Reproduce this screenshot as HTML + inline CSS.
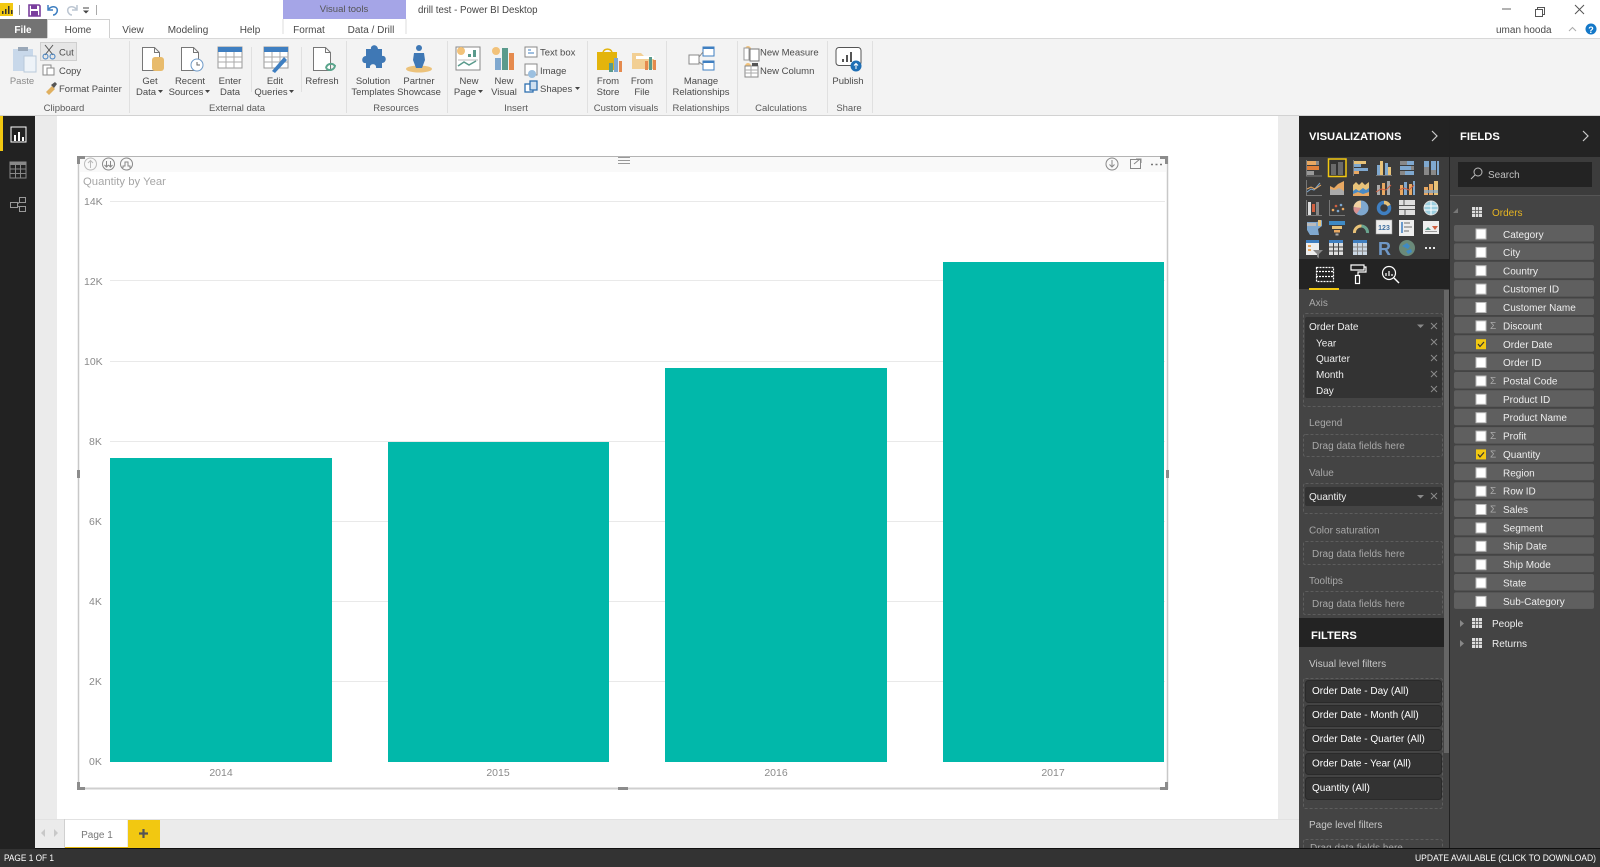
<!DOCTYPE html>
<html><head><meta charset="utf-8"><title>drill test - Power BI Desktop</title>
<style>
html,body{margin:0;padding:0;width:1600px;height:867px;overflow:hidden;background:#fff}
svg{display:block}
text{font-family:"Liberation Sans",sans-serif;font-size:9.5px;fill:#4a4a4a}
.m{text-anchor:middle}
.g{fill:#5a5a5a}
.t{font-size:10px}
.w{fill:#fff;font-size:10px}
.l{fill:#a8a8a8;font-size:10px}
.f{fill:#eee;font-size:10px}
.ax{fill:#8a8a8a;font-size:10.5px}
.h{fill:#fff;font-weight:bold;font-size:11.2px}
</style></head><body>
<svg width="1600" height="867" viewBox="0 0 1600 867" xmlns="http://www.w3.org/2000/svg">
<defs>
<g id="doc"><path d="M.5.5h12l5 5v18H.5z" fill="#fff" stroke="#777"/><path d="M12.5.5v5h5" fill="none" stroke="#777"/></g>
<g id="tb"><rect width="24" height="21" fill="#fff" stroke="#999"/><rect width="24" height="5" fill="#3f7fc1"/><path d="M0 10h24M0 15h24M8 5v16M16 5v16" stroke="#aaa"/></g>
<g id="x"><path d="M0 0l6 6M6 0l-6 6" stroke="#8a8a8a" fill="none"/></g>
<path id="dn" d="M0 0h7l-3.5 3.5z" fill="#8a8a8a"/>
<path id="arrow" d="M0 0h5l-2.5 3z" fill="#444"/>
<g id="cb"><rect width="10" height="10" fill="#fff" stroke="#bbb" stroke-width="1"/></g>
<g id="tbl"><rect width="10" height="10" fill="#ddd"/><path d="M0 3.5h10M0 6.5h10M3.5 0v10M6.5 0v10" stroke="#555" stroke-width=".8"/></g>
</defs>

<!-- title bar / tabs -->
<rect width="1600" height="867" fill="#fff"/>
<rect x="0" y="3" width="13" height="13" fill="#f2c811"/>
<path d="M2 14v-3h1.500v3zM5 14V9h1.500v5zM8 14V6h1.500v8zM11 14v-4h1.500v4z" fill="#333"/>
<path d="M19.500 5v10" stroke="#999"/>
<path d="M29 5h10l1 1v10H29z" fill="#fff" stroke="#7a3e9d" stroke-width="1.600"/><rect x="31" y="5" width="6" height="4" fill="#7a3e9d"/><rect x="31" y="11" width="7" height="5" fill="#7a3e9d"/>
<path d="M48 5v5h5M48 10c3-5 11-4 9 2-1 2-2 3-4 3" fill="none" stroke="#3f7fc1" stroke-width="1.500"/>
<path d="M77 5v5h-5M77 10c-3-5-11-4-9 2 1 2 2 3 4 3" fill="none" stroke="#bcc6d2" stroke-width="1.500"/>
<path d="M83 8h6" stroke="#444"/><path d="M83 10.500h6l-3 3z" fill="#444"/>
<path d="M96.500 5v10" stroke="#aaa"/>

<rect x="283" y="0" width="123" height="19" fill="#a5a5e7"/>
<text class="m" x="344" y="12" style="fill:#555">Visual tools</text>
<path d="M283 19v15M406 19v15" stroke="#ddd"/>
<text x="418" y="13" style="fill:#444;font-size:9.700px">drill test - Power BI Desktop</text>

<rect x="0" y="19" width="47" height="19" fill="#737373"/>
<text class="m w" x="23" y="33" style="font-weight:bold">File</text>
<path d="M47.500 38.500V19.500h62v19" fill="#fff" stroke="#d0d0d0"/>
<text class="m t" x="78" y="33">Home</text>
<text class="m t" x="133" y="33">View</text>
<text class="m t" x="188" y="33">Modeling</text>
<text class="m t" x="250" y="33">Help</text>
<text class="m t" x="309" y="33">Format</text>
<text class="m t" x="371" y="33">Data / Drill</text>

<path d="M1502 9h9" stroke="#666"/>
<rect x="1537.500" y="7.500" width="7" height="7" fill="none" stroke="#555"/><rect x="1535.500" y="9.500" width="7" height="7" fill="#fff" stroke="#555"/>
<path d="M1575 5l9 9M1584 5l-9 9" stroke="#555"/>
<text class="t" x="1496" y="33">uman hooda</text>
<path d="M1569 31l3.500-3.500 3.500 3.500" fill="none" stroke="#aaa"/>
<circle cx="1591" cy="29" r="5.500" fill="#1478c8"/><text class="m" x="1591" y="33" style="fill:#fff;font-weight:bold;font-size:9px">?</text>

<!-- ribbon -->
<rect x="0" y="38" width="1600" height="77" fill="#f3f3f3"/>
<path d="M0 38.500h47M110 38.500h1490" stroke="#d8d8d8"/>
<rect x="0" y="115" width="1600" height="1.500" fill="#d2d2d2"/>
<path d="M129.500 41v72M346.500 41v72M447.500 41v72M587.500 41v72M666.500 41v72M737.500 41v72M827.500 41v72M872.500 41v72M251.500 47v45M301.500 47v45" stroke="#e0e0e0"/>

<!-- clipboard -->
<rect x="13" y="49" width="20" height="22" fill="#c8d8ea"/><rect x="18" y="47" width="10" height="4" fill="#9aa8b8"/><rect x="24" y="56" width="12" height="16" fill="#eef3f8" stroke="#b8c8da"/>
<text class="m" x="22" y="84" style="fill:#8a8a8a">Paste</text>
<rect x="40.500" y="42.500" width="36" height="18" fill="#e6e6e6" stroke="#cfcfcf"/>
<path d="M45 45l8 10M53 45l-8 10" stroke="#555" fill="none"/><circle cx="45.500" cy="56.500" r="2.500" fill="none" stroke="#3f7fc1"/><circle cx="52.500" cy="56.500" r="2.500" fill="none" stroke="#3f7fc1"/>
<text x="59" y="55.500">Cut</text>
<rect x="43" y="65" width="8" height="10" fill="#fff" stroke="#888"/><rect x="47" y="68" width="7" height="7" fill="#fff" stroke="#888"/>
<text x="59" y="74">Copy</text>
<path d="M46 92l6-6 3 3-6 6z" fill="#e0b060"/><path d="M51 85l4-3 2 2-3 4z" fill="#555"/>
<text x="59" y="92">Format Painter</text>
<text class="m g" x="64" y="111">Clipboard</text>

<!-- external data -->
<use href="#doc" x="142" y="47"/><rect x="152" y="57" width="12" height="14" rx="3" fill="#e8bb6c"/>
<text class="m" x="150" y="84">Get</text><text class="m" x="146" y="95">Data</text><use href="#arrow" x="158" y="90"/>
<use href="#doc" x="181" y="47"/><circle cx="197" cy="65" r="6" fill="#fff" stroke="#6e9ac8"/><path d="M197 62v3h3" stroke="#666" fill="none"/>
<text class="m" x="190" y="84">Recent</text><text class="m" x="186" y="95">Sources</text><use href="#arrow" x="205" y="90"/>
<use href="#tb" x="218" y="47"/>
<text class="m" x="230" y="84">Enter</text><text class="m" x="230" y="95">Data</text>
<use href="#tb" x="264" y="47"/><path d="M272 71l12-14 3 3-12 13z" fill="#3f7fc1"/>
<text class="m" x="275" y="84">Edit</text><text class="m" x="271" y="95">Queries</text><use href="#arrow" x="289" y="90"/>
<use href="#doc" x="313" y="47"/><path d="M326 68a5 5 0 0 1 9-2M335 65a5 5 0 0 1-9 3" fill="none" stroke="#5aa58c" stroke-width="2"/>
<text class="m" x="322" y="84">Refresh</text>
<text class="m g" x="237" y="111">External data</text>

<!-- resources -->
<path d="M368 52h5c-1-4 6-6 7 0h4v7c5-1 5 7 0 7v5h-6c1-5-7-5-6 0h-4v-5c-5 1-5-7 0-7z" fill="#3f78b5" transform="translate(-2,-3)"/>
<text class="m" x="373" y="84">Solution</text><text class="m" x="373" y="95">Templates</text>
<ellipse cx="419" cy="69" rx="13" ry="3.500" fill="#ecc27a"/><circle cx="419" cy="48" r="3" fill="#3f78b5"/><path d="M414 53h10l1 7-3 8h-6l-3-8z" fill="#3f78b5"/>
<text class="m" x="419" y="84">Partner</text><text class="m" x="419" y="95">Showcase</text>
<text class="m g" x="396" y="111">Resources</text>

<!-- insert -->
<rect x="456" y="47" width="24" height="23" fill="#fff" stroke="#888"/><circle cx="461" cy="51" r="4" fill="#f2c27a"/>
<path d="M468 57v-3h3v3zM473 57v-7h3v7z" fill="#5a9a8c"/><path d="M458 66l6-4 5 3 7-4" fill="none" stroke="#5a9a8c" stroke-width="1.500"/><path d="M458 60h20" stroke="#bbb"/>
<text class="m" x="469" y="84">New</text><text class="m" x="465" y="95">Page</text><use href="#arrow" x="478" y="90"/>
<circle cx="496" cy="51" r="4" fill="#f2c27a"/><rect x="495" y="58" width="6" height="12" fill="#7fa8cf"/><rect x="502" y="48" width="6" height="22" fill="#5a9a8c"/><rect x="509" y="53" width="5" height="17" fill="#e58a4e"/>
<text class="m" x="504" y="84">New</text><text class="m" x="504" y="95">Visual</text>
<rect x="525" y="47" width="12" height="10" fill="#fff" stroke="#888"/><path d="M528 50h3M528 53h6" stroke="#3f7fc1"/>
<text x="540" y="55.500">Text box</text>
<rect x="525" y="64" width="12" height="11" fill="#fff" stroke="#888"/><circle cx="532" cy="74" r="4" fill="#9cc0e0"/>
<text x="540" y="74">Image</text>
<rect x="525" y="84" width="8" height="8" fill="#fff" stroke="#2f70b0" stroke-width="1.300"/><rect x="530" y="81" width="7" height="9" fill="#cfe0f0" stroke="#2f70b0" stroke-width="1.300"/>
<text x="540" y="92">Shapes</text><use href="#arrow" x="575" y="87"/>
<text class="m g" x="516" y="111">Insert</text>

<!-- custom visuals -->
<path d="M597 52h20v18h-20z" fill="#e3b40c"/><path d="M603 52a5 5 0 0 1 9 0" fill="none" stroke="#e3b40c" stroke-width="1.500"/>
<rect x="609" y="63" width="4" height="9" fill="#5a9a8c"/><rect x="614" y="58" width="4" height="14" fill="#7fa8cf"/><rect x="619" y="61" width="3" height="11" fill="#e58a4e"/>
<text class="m" x="608" y="84">From</text><text class="m" x="608" y="95">Store</text>
<path d="M632 53h9l3 3h10v13h-22z" fill="#f2cf94"/><path d="M636 56h18v3h-18z" fill="#fff"/><rect x="645" y="61" width="3" height="9" fill="#e58a4e"/><rect x="649" y="57" width="3" height="13" fill="#5a9a8c"/><rect x="653" y="60" width="3" height="10" fill="#e58a4e"/>
<text class="m" x="642" y="84">From</text><text class="m" x="642" y="95">File</text>
<text class="m g" x="626" y="111">Custom visuals</text>

<!-- relationships -->
<rect x="689" y="55" width="10" height="9" fill="#fff" stroke="#888"/><rect x="703" y="47" width="11" height="9" fill="#fff" stroke="#3f7fc1"/><rect x="703" y="61" width="11" height="9" fill="#fff" stroke="#3f7fc1"/>
<path d="M699 57l4-5M699 62l4 3" stroke="#888"/><rect x="703" y="47" width="11" height="2" fill="#3f7fc1"/><rect x="703" y="61" width="11" height="2" fill="#3f7fc1"/>
<text class="m" x="701" y="84">Manage</text><text class="m" x="701" y="95">Relationships</text>
<text class="m g" x="701" y="111">Relationships</text>

<!-- calculations -->
<circle cx="748" cy="49" r="3" fill="#f2c27a"/><rect x="750" y="49" width="9" height="12" fill="#fff" stroke="#777"/><rect x="744" y="48" width="5" height="12" fill="#fff" stroke="#999"/>
<text x="760" y="55.500">New Measure</text>
<circle cx="748" cy="66" r="3" fill="#f2c27a"/><rect x="745" y="66" width="13" height="11" fill="#fff" stroke="#888"/><rect x="752" y="63" width="6" height="3" fill="#555"/><path d="M745 70h13M745 73h13M751 66v11" stroke="#aaa"/>
<text x="760" y="74">New Column</text>
<text class="m g" x="781" y="111">Calculations</text>

<!-- publish -->
<rect x="836" y="47.500" width="25" height="18" rx="3" fill="#fff" stroke="#555"/>
<path d="M843 62v-3M847 62v-7M851 62v-10" stroke="#555" stroke-width="2"/>
<circle cx="856" cy="66" r="5.500" fill="#1f6fb5"/><path d="M856 69v-5M854 65.500l2-2 2 2" stroke="#fff" fill="none"/>
<text class="m" x="848" y="84">Publish</text>
<text class="m g" x="849" y="111">Share</text>

<!-- left nav -->
<rect x="0" y="116" width="35" height="733" fill="#222"/>
<rect x="0" y="116" width="3" height="35" fill="#f2c811"/>
<rect x="11" y="127" width="15" height="15" fill="#222" stroke="#fff"/><path d="M14 141v-6h2v6zM18 141v-9h2v9zM22 141v-4h2v4z" fill="#fff"/>
<rect x="10" y="162" width="16" height="16" fill="#222" stroke="#888"/><rect x="10" y="162" width="16" height="3" fill="#888"/><path d="M10 169h16M10 173.500h16M15.500 165v13M20.500 165v13" stroke="#888"/>
<rect x="10.500" y="202.500" width="7" height="5" fill="none" stroke="#999"/><rect x="19.500" y="197.500" width="6" height="5" fill="none" stroke="#999"/><rect x="19.500" y="206.500" width="6" height="5" fill="none" stroke="#999"/><path d="M17.500 204l2-2M17.500 206l2 1" stroke="#999"/>

<!-- canvas -->
<rect x="35" y="116" width="1264" height="703" fill="#ebebeb"/>
<rect x="57" y="116" width="1221" height="703" fill="#fff"/>

<!-- visual -->
<rect x="80" y="157" width="1086" height="15" fill="#f9f9f9"/>
<path d="M78.500 156.500H1166.500" stroke="#b4b4b4"/>
<path d="M78.500 156v633M1167.500 156v633" stroke="#c8c8c8" stroke-width="1.500"/>
<path d="M77 788.500H1168" stroke="#cfcfcf" stroke-width="2"/>
<path d="M77 164v-8h8v3h-5v5z" fill="#8c8c8c"/>
<path d="M1168 164v-8h-8v3h5v5z" fill="#8c8c8c"/>
<path d="M77 782v8h8v-3h-5v-5z" fill="#8c8c8c"/>
<path d="M1168 782v8h-8v-3h5v-5z" fill="#8c8c8c"/>
<rect x="77" y="470" width="3" height="8" fill="#8c8c8c"/><rect x="1166" y="470" width="3" height="8" fill="#8c8c8c"/>
<rect x="618" y="787" width="10" height="3" fill="#8c8c8c"/>
<path d="M618 157.500h12M618 160.500h12M618 163.500h12" stroke="#999"/>

<g fill="none" stroke="#bbb">
<circle cx="90.500" cy="164" r="6"/><path d="M90.500 168v-7M88 163l2.500-2.500 2.500 2.500"/>
</g>
<g fill="none" stroke="#888">
<circle cx="108.500" cy="164" r="6"/><path d="M106.500 161v6M110.500 161v6M104.500 165l2 2 2-2M108.500 165l2 2 2-2"/>
<circle cx="126.500" cy="164" r="6"/><path d="M123 168v-2h2v-4h3v4h2v2"/>
<circle cx="1112" cy="164" r="6"/><path d="M1112 160v7M1109.500 164.500l2.500 2.500 2.500-2.500"/>
<rect x="1130.500" y="159.500" width="10" height="9"/><path d="M1134 164l6-5M1136 159h5v4"/>
</g>
<path d="M1151 164.500h2M1155.500 164.500h2M1160 164.500h2" stroke="#777" stroke-width="1.500"/>

<text x="83" y="185" style="fill:#a6a6a6;font-size:11.300px">Quantity by Year</text>

<g stroke="#e9e9e9">
<path d="M110 201.500H1165M110 280.500H1165M110 361.500H1165M110 441.500H1165M110 521.500H1165M110 601.500H1165M110 681.500H1165"/>
</g>
<text class="ax" x="84" y="205">14K</text>
<text class="ax" x="84" y="285">12K</text>
<text class="ax" x="84" y="365">10K</text>
<text class="ax" x="89" y="445">8K</text>
<text class="ax" x="89" y="525">6K</text>
<text class="ax" x="89" y="605">4K</text>
<text class="ax" x="89" y="685">2K</text>
<text class="ax" x="89" y="765">0K</text>
<rect x="110" y="458" width="222" height="304" fill="#01b8aa"/>
<rect x="388" y="442" width="221" height="320" fill="#01b8aa"/>
<rect x="665" y="368" width="222" height="394" fill="#01b8aa"/>
<rect x="943" y="262" width="221" height="500" fill="#01b8aa"/>
<text class="ax m" x="221" y="776">2014</text>
<text class="ax m" x="498" y="776">2015</text>
<text class="ax m" x="776" y="776">2016</text>
<text class="ax m" x="1053" y="776">2017</text>

<!-- page tabs -->
<rect x="35" y="819" width="1264" height="30" fill="#ebebeb"/>
<path d="M35 819.500H1299" stroke="#e2e2e2"/>
<rect x="64" y="819" width="1" height="30" fill="#d0d0d0"/>
<path d="M45 829l-4 4 4 4zM54 829l4 4-4 4z" fill="#c8c8c8"/>
<rect x="65" y="820" width="62" height="27" fill="#fff"/>
<rect x="65" y="847" width="95" height="2" fill="#e3b70e"/>
<text class="m" x="97" y="838" style="font-size:10px;fill:#777">Page 1</text>
<rect x="128" y="820" width="32" height="28" fill="#f2c811"/>
<path d="M143.500 829v9M139 833.500h9" stroke="#555" stroke-width="2.200"/>

<!-- Visualizations pane -->
<rect x="1299" y="116" width="150" height="733" fill="#444"/>
<rect x="1299" y="116" width="150" height="41" fill="#232323"/>
<rect x="1299" y="157" width="150" height="102" fill="#3c3c3c"/>
<rect x="1299" y="259" width="150" height="30" fill="#232323"/>
<text class="h" x="1309" y="140">VISUALIZATIONS</text>
<path d="M1432 131l5 5-5 5" fill="none" stroke="#ccc" stroke-width="1.200"/>

<!-- viz icons -->
<g>
<g transform="translate(1306,160)"><rect y="1" width="10" height="4" fill="#e8a862"/><rect x="10" y="1" width="3" height="4" fill="#888"/><rect y="6" width="13" height="4" fill="#e0803a"/><rect y="11" width="8" height="4" fill="#999"/><path d="M.5 0v16H16" stroke="#777" fill="none"/></g>
<g transform="translate(1329,160)"><rect x="-.500" y="-1" width="17.500" height="17.500" fill="#333" stroke="#f2c811" stroke-width="1.500"/><rect x="2" y="4" width="5" height="11" fill="#6a6a6a"/><rect x="9" y="2" width="5" height="13" fill="#6a6a6a"/></g>
<g transform="translate(1353,160)"><rect y="1" width="13" height="3" fill="#e8c278"/><rect y="4" width="8" height="3" fill="#7fa8cf"/><rect y="8" width="15" height="3" fill="#7fa8cf"/><rect y="11" width="6" height="3" fill="#e8a862"/><path d="M.5 0v16" stroke="#777"/></g>
<g transform="translate(1376,160)"><rect x="1" y="5" width="3" height="10" fill="#7fa8cf"/><rect x="4" y="1" width="3" height="14" fill="#e8c278"/><rect x="9" y="3" width="3" height="12" fill="#7fa8cf"/><rect x="12" y="7" width="3" height="8" fill="#e8c278"/><path d="M0 15.500h16" stroke="#777"/></g>
<g transform="translate(1399,160)"><rect x="1" y="1" width="7" height="4" fill="#888"/><rect x="8" y="1" width="7" height="4" fill="#7fa8cf"/><rect x="1" y="6" width="11" height="4" fill="#7fa8cf"/><rect x="12" y="6" width="3" height="4" fill="#888"/><rect x="1" y="11" width="5" height="4" fill="#888"/><rect x="6" y="11" width="9" height="4" fill="#7fa8cf"/></g>
<g transform="translate(1423,160)"><rect x="1" y="1" width="5" height="6" fill="#7fa8cf"/><rect x="1" y="7" width="5" height="8" fill="#888"/><rect x="8" y="1" width="5" height="9" fill="#7fa8cf"/><rect x="8" y="10" width="5" height="5" fill="#888"/><rect x="14" y="1" width="2" height="14" fill="#7fa8cf"/></g>

<g transform="translate(1306,180)"><path d="M.5 0v15.500H16" stroke="#777" fill="none"/><path d="M1 12l4-3 3 1 6-7" stroke="#7fa8cf" fill="none"/><path d="M1 9l4-2 4 2 6-4" stroke="#e8a862" fill="none"/></g>
<g transform="translate(1329,180)"><path d="M1 15V6l4 2 4-4 6-3v14z" fill="#e8a862"/><path d="M1 15V9l5 1 4-2 5 3v4z" fill="#aaa"/></g>
<g transform="translate(1353,180)"><path d="M0 16V5l3-3 3 3 3-3 3 3 4-3v14z" fill="#e8c278"/><path d="M0 11l3-2 3 2 4-3 3 2 3-2v8H0z" fill="#4a8ac4"/><path d="M0 14l5-2 5 2 6-2v4H0z" fill="#e8a862"/></g>
<g transform="translate(1376,180)"><rect x="1" y="5" width="3" height="10" fill="#aaa"/><rect x="6" y="3" width="3" height="12" fill="#e8a862"/><rect x="11" y="1" width="3" height="14" fill="#aaa"/><path d="M0 12l5-3 5 1 5-5" stroke="#d06040" fill="none"/></g>
<g transform="translate(1399,180)"><rect x="1" y="5" width="3" height="10" fill="#e8a862"/><rect x="5" y="2" width="3" height="13" fill="#7fa8cf"/><rect x="10" y="4" width="3" height="11" fill="#e8a862"/><rect x="14" y="1" width="2" height="14" fill="#7fa8cf"/><path d="M0 10l5-2 5 2 5-5" stroke="#d06040" fill="none"/></g>
<g transform="translate(1423,180)"><rect x="1" y="7" width="4" height="8" fill="#e8a862"/><rect x="6" y="4" width="4" height="11" fill="#e8a862"/><rect x="11" y="1" width="4" height="14" fill="#e8c278"/><rect x="1" y="10" width="14" height="3" fill="#7fa8cf" opacity=".7"/></g>

<g transform="translate(1306,200)"><path d="M.5 0v15.500H16" stroke="#777" fill="none"/><rect x="2" y="2" width="3" height="13" fill="#ddd"/><rect x="6" y="4" width="3" height="8" fill="#d06040"/><rect x="10" y="2" width="3" height="13" fill="#888"/></g>
<g transform="translate(1329,200)"><path d="M.5 0v15.500H16" stroke="#777" fill="none"/><circle cx="4" cy="10" r="1.300" fill="#e8a862"/><circle cx="7" cy="6" r="1.300" fill="#d06040"/><circle cx="9" cy="11" r="1.300" fill="#7fa8cf"/><circle cx="12" cy="5" r="1.300" fill="#7fa8cf"/><circle cx="14" cy="9" r="1.300" fill="#e8a862"/></g>
<g transform="translate(1353,200)"><circle cx="8" cy="8" r="7.500" fill="#7fa8cf"/><path d="M8 8V.5A7.500 7.500 0 0 0 .5 7z" fill="#f0d0a0"/><path d="M8 8L.5 7a7.500 7.500 0 0 0 3 7z" fill="#d89090"/></g>
<g transform="translate(1376,200)"><circle cx="8" cy="8" r="5.500" fill="none" stroke="#3f7fc1" stroke-width="3.500"/><path d="M8 2.500a5.500 5.500 0 0 1 5 3" fill="none" stroke="#e8c278" stroke-width="3.500"/></g>
<g transform="translate(1399,200)"><rect width="16" height="15" fill="#ddd"/><path d="M0 5.500h16M0 9.500h16M6 9.500v6M5 0v5.500" stroke="#555"/></g>
<g transform="translate(1423,200)"><circle cx="8" cy="8" r="7" fill="#9ccfe0" stroke="#ddd"/><path d="M1 6h14M1 10h14M8 1v14" stroke="#fff"/></g>

<g transform="translate(1306,220)"><path d="M1 2h10l5-2v6l-4 3 1 6H4l-3-5z" fill="#7fa8cf"/><path d="M1 3h9v3H1z" fill="#bbb"/><rect x="12" y="0" width="3" height="6" fill="#e8c278"/></g>
<g transform="translate(1329,220)"><rect x="0" y="1" width="16" height="4" fill="#3f8ac4"/><rect x="3" y="6" width="10" height="3" fill="#e8c278"/><rect x="5" y="10" width="6" height="2.500" fill="#e8a862"/><rect x="6.500" y="13.500" width="3" height="2" fill="#aaa"/></g>
<g transform="translate(1353,220)"><path d="M1.500 13a6.500 6.500 0 0 1 7-7" fill="none" stroke="#e8c278" stroke-width="3"/><path d="M8.500 6a6.500 6.500 0 0 1 6 7" fill="none" stroke="#6aa590" stroke-width="3"/></g>
<g transform="translate(1376,220)"><rect width="16" height="14" fill="#eee" stroke="#999" stroke-width=".5"/><text x="8" y="10" class="m" style="font-size:7px;fill:#3f6fa0;font-weight:bold">123</text></g>
<g transform="translate(1399,220)"><rect width="15" height="16" fill="#eee"/><path d="M3 2v11" stroke="#3f7fc1" stroke-width="1.500"/><path d="M5 3h6M5 7h8M5 11h5" stroke="#999" stroke-width="1.500"/></g>
<g transform="translate(1423,221)"><rect width="16" height="13" fill="#eee"/><path d="M2 9l3-3 3 3z" fill="#5a9a8c"/><path d="M9 5h6l-3 4z" fill="#d06040"/><path d="M2 10.500h12" stroke="#999"/></g>

<g transform="translate(1306,240)"><rect width="13" height="15" fill="#eee"/><rect width="13" height="3" fill="#3f7fc1"/><rect x="2" y="5" width="3" height="2" fill="#e8a862"/><rect x="2" y="9" width="3" height="2" fill="#e8a862"/><path d="M7 10h10l-4 4v4l-2-1v-3z" fill="#888"/></g>
<g transform="translate(1329,240)"><rect width="14" height="15" fill="#ddd"/><rect width="14" height="3" fill="#3f7fc1"/><path d="M4.500 3v12M9.500 3v12M0 7h14M0 11h14" stroke="#444"/></g>
<g transform="translate(1353,240)"><rect width="14" height="15" fill="#ccd8e4"/><rect width="14" height="3" fill="#3f7fc1"/><path d="M4.500 3v12M9.500 3v12M0 7h14M0 11h14" stroke="#888"/></g>
<text x="1378" y="255" style="font-size:18px;font-weight:bold;fill:#6f98c8">R</text>
<g transform="translate(1399,240)"><circle cx="8" cy="8" r="8" fill="#6a8a7a"/><path d="M3 6l5-3 3 3-2 3zM7 11l5-2 1 3-4 2z" fill="#3f8ac4"/></g>
<path d="M1425 248h2M1429 248h2M1433 248h2" stroke="#fff" stroke-width="1.800"/>
</g>

<!-- viz tabs -->
<g fill="none" stroke="#fff" stroke-width="1.200">
<rect x="1316.500" y="267.500" width="17" height="14" stroke-dasharray="2 1"/><path d="M1316 271.500h18M1316 276.500h18" stroke-dasharray="2 1"/>
<path d="M1351 265h13v5h-13zM1364 267h2v5h-8v3"/><rect x="1355.500" y="275.500" width="4" height="8"/>
<circle cx="1389" cy="273" r="6.500"/><path d="M1394 278l5 5" stroke-width="1.500"/><path d="M1386 276v-3M1389 276v-5M1392 276v-2"/>
</g>
<rect x="1309" y="288" width="30" height="2" fill="#f2c811"/>

<!-- wells -->
<g fill="none" stroke="#5d5d5d" stroke-dasharray="3 2">
<rect x="1303.500" y="313.500" width="139" height="93" rx="2"/>
<rect x="1303.500" y="434.500" width="139" height="22" rx="2"/>
<rect x="1303.500" y="483.500" width="139" height="30" rx="2"/>
<rect x="1303.500" y="541.500" width="139" height="23" rx="2"/>
<rect x="1303.500" y="591.500" width="139" height="23" rx="2"/>
<rect x="1303.500" y="678.500" width="139" height="130" rx="2"/>
<rect x="1303.500" y="839.500" width="139" height="30" rx="2"/>
</g>
<text class="l" x="1309" y="306">Axis</text>
<rect x="1305" y="317" width="137" height="81" rx="2" fill="#333"/>
<text class="f" x="1309" y="330">Order Date</text>
<text class="f" x="1316" y="346.500">Year</text>
<text class="f" x="1316" y="362">Quarter</text>
<text class="f" x="1316" y="378">Month</text>
<text class="f" x="1316" y="394">Day</text>
<use href="#dn" x="1417" y="324.500"/>
<use href="#x" x="1431" y="323"/><use href="#x" x="1431" y="339"/><use href="#x" x="1431" y="355"/><use href="#x" x="1431" y="371"/><use href="#x" x="1431" y="386"/>
<text class="l" x="1309" y="426">Legend</text>
<text class="l" x="1312" y="449">Drag data fields here</text>
<text class="l" x="1309" y="476">Value</text>
<rect x="1305" y="487" width="137" height="19" rx="2" fill="#333"/>
<text class="f" x="1309" y="500">Quantity</text>
<use href="#dn" x="1417" y="495"/><use href="#x" x="1431" y="493"/>
<text class="l" x="1309" y="533.500">Color saturation</text>
<text class="l" x="1312" y="557">Drag data fields here</text>
<text class="l" x="1309" y="584">Tooltips</text>
<text class="l" x="1312" y="607">Drag data fields here</text>

<rect x="1299" y="618" width="145" height="29" fill="#232323"/>
<rect x="1444" y="290" width="5" height="463" fill="#666"/>
<text class="h" x="1311" y="639">FILTERS</text>
<text x="1309" y="667" style="fill:#c8c8c8;font-size:10px">Visual level filters</text>
<g fill="#333" stroke="#2a2a2a">
<rect x="1305.500" y="680.500" width="136" height="22" rx="3"/>
<rect x="1305.500" y="705.500" width="136" height="21" rx="3"/>
<rect x="1305.500" y="729.500" width="136" height="21" rx="3"/>
<rect x="1305.500" y="753.500" width="136" height="21" rx="3"/>
<rect x="1305.500" y="777.500" width="136" height="22" rx="3"/>
</g>
<text class="w" x="1312" y="694">Order Date - Day (All)</text>
<text class="w" x="1312" y="718">Order Date - Month  (All)</text>
<text class="w" x="1312" y="742">Order Date - Quarter  (All)</text>
<text class="w" x="1312" y="766.500">Order Date - Year  (All)</text>
<text class="w" x="1312" y="791">Quantity  (All)</text>
<text x="1309" y="828" style="fill:#c8c8c8;font-size:10px">Page level filters</text>
<text class="l" x="1310" y="851">Drag data fields here</text>

<!-- Fields pane -->
<rect x="1449" y="116" width="151" height="733" fill="#444"/>
<rect x="1449" y="116" width="1" height="733" fill="#222"/>
<rect x="1450" y="116" width="150" height="41" fill="#232323"/>
<rect x="1450" y="157" width="150" height="38" fill="#3c3c3c"/>
<rect x="1450" y="195" width="150" height="1" fill="#555"/>
<text class="h" x="1460" y="140">FIELDS</text>
<path d="M1583 131l5 5-5 5" fill="none" stroke="#ccc" stroke-width="1.200"/>
<rect x="1458" y="162" width="134" height="25" fill="#232323"/>
<circle cx="1478" cy="172" r="4" fill="none" stroke="#bbb"/><path d="M1475 175l-4 4" stroke="#bbb"/>
<text x="1488" y="178" style="fill:#c0c0c0;font-size:10px">Search</text>
<path d="M1458 208v5h-5z" fill="#777"/>
<use href="#tbl" x="1472" y="207"/>
<text x="1492" y="216" style="fill:#e6b422;font-size:10px">Orders</text>

<g fill="#5f5f5f">
<rect x="1454" y="225" width="140" height="16.500" rx="2"/><rect x="1454" y="243.400" width="140" height="16.500" rx="2"/><rect x="1454" y="261.700" width="140" height="16.500" rx="2"/><rect x="1454" y="280.100" width="140" height="16.500" rx="2"/><rect x="1454" y="298.500" width="140" height="16.500" rx="2"/><rect x="1454" y="316.900" width="140" height="16.500" rx="2"/><rect x="1454" y="335.200" width="140" height="16.500" rx="2"/><rect x="1454" y="353.600" width="140" height="16.500" rx="2"/><rect x="1454" y="372" width="140" height="16.500" rx="2"/><rect x="1454" y="390.300" width="140" height="16.500" rx="2"/><rect x="1454" y="408.700" width="140" height="16.500" rx="2"/><rect x="1454" y="427.100" width="140" height="16.500" rx="2"/><rect x="1454" y="445.400" width="140" height="16.500" rx="2"/><rect x="1454" y="463.800" width="140" height="16.500" rx="2"/><rect x="1454" y="482.200" width="140" height="16.500" rx="2"/><rect x="1454" y="500.500" width="140" height="16.500" rx="2"/><rect x="1454" y="518.900" width="140" height="16.500" rx="2"/><rect x="1454" y="537.300" width="140" height="16.500" rx="2"/><rect x="1454" y="555.700" width="140" height="16.500" rx="2"/><rect x="1454" y="574" width="140" height="16.500" rx="2"/><rect x="1454" y="592.400" width="140" height="16.500" rx="2"/>
</g>
<use href="#cb" x="1476" y="229"/><use href="#cb" x="1476" y="247.400"/><use href="#cb" x="1476" y="265.700"/><use href="#cb" x="1476" y="284.100"/><use href="#cb" x="1476" y="302.500"/><use href="#cb" x="1476" y="320.900"/>
<rect x="1476" y="339.200" width="10" height="10" fill="#f2c811"/><path d="M1478 344l2 2.500 4-4.500" fill="none" stroke="#333" stroke-width="1.200"/>
<use href="#cb" x="1476" y="357.600"/><use href="#cb" x="1476" y="376"/><use href="#cb" x="1476" y="394.300"/><use href="#cb" x="1476" y="412.700"/><use href="#cb" x="1476" y="431.100"/>
<rect x="1476" y="449.400" width="10" height="10" fill="#f2c811"/><path d="M1478 454.400l2 2.500 4-4.500" fill="none" stroke="#333" stroke-width="1.200"/>
<use href="#cb" x="1476" y="467.800"/><use href="#cb" x="1476" y="486.200"/><use href="#cb" x="1476" y="504.500"/><use href="#cb" x="1476" y="522.900"/><use href="#cb" x="1476" y="541.300"/><use href="#cb" x="1476" y="559.700"/><use href="#cb" x="1476" y="578"/><use href="#cb" x="1476" y="596.400"/>
<text x="1490" y="329" style="fill:#aaa;font-size:10px">Σ</text><text x="1490" y="384" style="fill:#aaa;font-size:10px">Σ</text><text x="1490" y="439" style="fill:#aaa;font-size:10px">Σ</text><text x="1490" y="457.500" style="fill:#aaa;font-size:10px">Σ</text><text x="1490" y="494" style="fill:#aaa;font-size:10px">Σ</text><text x="1490" y="512.500" style="fill:#aaa;font-size:10px">Σ</text>
<text class="f" x="1503" y="238">Category</text>
<text class="f" x="1503" y="256">City</text>
<text class="f" x="1503" y="274.500">Country</text>
<text class="f" x="1503" y="292.500">Customer ID</text>
<text class="f" x="1503" y="311">Customer Name</text>
<text class="f" x="1503" y="329.500">Discount</text>
<text class="f" x="1503" y="348">Order Date</text>
<text class="f" x="1503" y="366">Order ID</text>
<text class="f" x="1503" y="384.500">Postal Code</text>
<text class="f" x="1503" y="403">Product ID</text>
<text class="f" x="1503" y="421">Product Name</text>
<text class="f" x="1503" y="439.500">Profit</text>
<text class="f" x="1503" y="458">Quantity</text>
<text class="f" x="1503" y="476.500">Region</text>
<text class="f" x="1503" y="494.500">Row ID</text>
<text class="f" x="1503" y="513">Sales</text>
<text class="f" x="1503" y="531.500">Segment</text>
<text class="f" x="1503" y="549.500">Ship Date</text>
<text class="f" x="1503" y="568">Ship Mode</text>
<text class="f" x="1503" y="586.500">State</text>
<text class="f" x="1503" y="605">Sub-Category</text>
<path d="M1460 620l4 3.500-4 3.500zM1460 640l4 3.500-4 3.500z" fill="#888"/>
<use href="#tbl" x="1472" y="618"/><use href="#tbl" x="1472" y="638"/>
<text class="f" x="1492" y="627">People</text>
<text class="f" x="1492" y="647">Returns</text>

<!-- status -->
<rect x="0" y="849" width="1600" height="18" fill="#333"/>
<rect x="35" y="848" width="1565" height="1" fill="#111"/>
<text class="w" x="4" y="861" textLength="50" lengthAdjust="spacingAndGlyphs" style="font-size:9.500px">PAGE 1 OF 1</text>
<text class="w" x="1415" y="861" textLength="181" lengthAdjust="spacingAndGlyphs" style="font-size:9.500px">UPDATE AVAILABLE (CLICK TO DOWNLOAD)</text>
</svg>
</body></html>
